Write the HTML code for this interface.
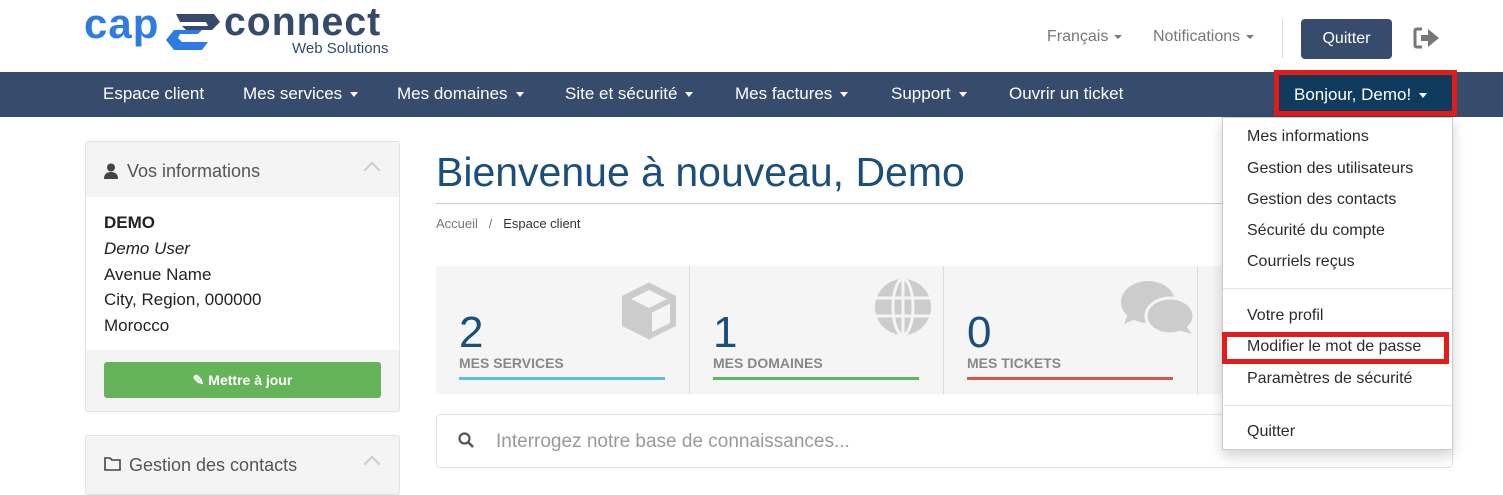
<!DOCTYPE html>
<html><head><meta charset="utf-8"><style>
*{box-sizing:border-box;margin:0;padding:0}
body{width:1503px;height:484px;overflow:hidden;background:#fff;font-family:"Liberation Sans",sans-serif;color:#333;position:relative}
.a{position:absolute}
.nav{left:0;top:72px;width:1503px;height:45px;background:#374b6c}
.nav span{position:absolute;top:12px;color:#fff;font-size:17px}
.car{display:inline-block;border-top:5px solid currentColor;border-left:4px solid transparent;border-right:4px solid transparent;vertical-align:middle;margin-left:8px}
.panel{background:#f4f4f4;border:1px solid #e3e3e3;border-radius:3px}
.dd span{position:absolute;left:25px;font-size:16px;color:#2b2b2b}
.stat{top:266px;width:254px;height:128px;background:#f5f5f5;border-right:1px solid #ddd}
.stat .n{position:absolute;left:23px;top:42px;font-size:44px;color:#1a4e7c}
.stat .l{position:absolute;left:23px;top:89px;font-size:14px;font-weight:bold;color:#888}
.stat .b{position:absolute;left:23px;top:111px;width:206px;height:3px}
</style></head><body>
<!-- logo -->
<div class="a" style="left:84px;top:0px;font-size:42px;font-weight:bold;color:#2e7be3;letter-spacing:1px">cap</div>
<svg class="a" style="left:162px;top:8px" width="58" height="44" viewBox="0 0 58 44"><path d="M14 6 H52 L58 14 L50 22 H24 L20 18 H46 L44 14 H18 Z" fill="#364a6b"/><path d="M12 22 H40 L36 26 H18 L16 30 L20 34 H46 L40 42 H12 L4 32 Z" fill="#2e7be3"/></svg>
<div class="a" style="left:224px;top:0px;font-size:40px;font-weight:bold;color:#364a6b;letter-spacing:1px;transform:scaleX(0.98);transform-origin:left">connect</div>
<div class="a" style="left:292px;top:40px;font-size:15px;color:#364a6b">Web Solutions</div>
<div class="a" style="left:1047px;top:28px;font-size:16px;color:#777">Français<span class="car" style="border-top-width:4px;margin-left:6px"></span></div>
<div class="a" style="left:1153px;top:28px;font-size:16px;color:#777">Notifications<span class="car" style="border-top-width:4px;margin-left:6px"></span></div>
<div class="a" style="left:1282px;top:19px;width:1px;height:39px;background:#ddd"></div>
<div class="a" style="left:1301px;top:19px;width:91px;height:40px;background:#374b6c;border-radius:4px;color:#fff;font-size:16px;text-align:center;line-height:40px">Quitter</div>
<svg class="a" style="left:1413px;top:27px" width="27" height="22" viewBox="0 0 27 22"><path d="M9 2H4Q2 2 2 4V18Q2 20 4 20H9" stroke="#777" stroke-width="3" fill="none"/><path d="M8 8H15V2L26 11L15 20V14H8Z" fill="#777"/></svg>
<div class="a nav">
<span style="left:103px">Espace client</span>
<span style="left:243px">Mes services<i class="car"></i></span>
<span style="left:397px">Mes domaines<i class="car"></i></span>
<span style="left:565px">Site et sécurité<i class="car"></i></span>
<span style="left:735px">Mes factures<i class="car"></i></span>
<span style="left:891px">Support<i class="car"></i></span>
<span style="left:1009px">Ouvrir un ticket</span>
</div>
<div class="a" style="left:1274px;top:70px;width:183px;height:46px;border:5px solid #e31b1b;background:#0f3b5e;color:#fff;font-size:17px;padding:10px 0 0 15px">Bonjour, Demo!<i class="car"></i></div>
<!-- sidebar -->
<div class="a panel" style="left:85px;top:141px;width:315px;height:271px"></div>
<div class="a" style="left:86px;top:197px;width:313px;height:153px;background:#fff"></div>
<svg class="a" style="left:104px;top:163px" width="14" height="16" viewBox="0 0 14 16"><circle cx="7" cy="4.5" r="4" fill="#444"/><path d="M0 16Q0 9 7 9Q14 9 14 16Z" fill="#444"/></svg>
<div class="a" style="left:127px;top:161px;font-size:18px;color:#555">Vos informations</div>
<div class="a" style="left:366px;top:164px;width:12px;height:12px;border-left:2px solid #ccc;border-top:2px solid #ccc;transform:rotate(45deg)"></div>
<div class="a" style="left:104px;top:210px;font-size:17px;line-height:25.8px;color:#222"><b>DEMO</b><br><i>Demo User</i><br>Avenue Name<br>City, Region, 000000<br>Morocco</div>
<div class="a" style="left:104px;top:362px;width:277px;height:36px;background:#65b45a;border-radius:3px;color:#fff;font-size:14px;font-weight:bold;text-align:center;line-height:36px">✎ Mettre à jour</div>
<div class="a panel" style="left:85px;top:435px;width:315px;height:60px"></div>
<svg class="a" style="left:104px;top:457px" width="17" height="14" viewBox="0 0 17 14"><path d="M1 1H6L8 3H16V13H1Z" fill="none" stroke="#444" stroke-width="1.6"/></svg>
<div class="a" style="left:129px;top:455px;font-size:18px;color:#555">Gestion des contacts</div>
<div class="a" style="left:366px;top:458px;width:12px;height:12px;border-left:2px solid #ccc;border-top:2px solid #ccc;transform:rotate(45deg)"></div>
<!-- main -->
<div class="a" style="left:436px;top:149px;font-size:41px;color:#1a4e7c">Bienvenue à nouveau, Demo</div>
<div class="a" style="left:436px;top:203px;width:786px;height:1px;background:#ccc"></div>
<div class="a" style="left:436px;top:216px;font-size:13px;color:#777">Accueil &nbsp;&nbsp;/&nbsp;&nbsp; <span style="color:#333">Espace client</span></div>
<div class="a stat" style="left:436px"><div class="n">2</div><div class="l">MES SERVICES</div><div class="b" style="background:#5bc0de"></div>
<svg class="a" style="left:183px;top:16px" width="60" height="58" viewBox="0 0 40 38"><path d="M20 0L38 9V29L20 38L2 29V9Z" fill="#ccc"/><path d="M8 11L20 5L32 11L20 17Z" fill="#f5f5f5"/><path d="M22 20L34 14V27L22 33Z" fill="#f5f5f5"/></svg></div>
<div class="a stat" style="left:690px"><div class="n">1</div><div class="l">MES DOMAINES</div><div class="b" style="background:#5cb85c"></div>
<svg class="a" style="left:184px;top:12px" width="58" height="58" viewBox="0 0 58 58"><circle cx="29" cy="29" r="28" fill="#ccc"/><g stroke="#f5f5f5" stroke-width="3" fill="none"><ellipse cx="29" cy="29" rx="10" ry="28"/><path d="M29 1V57M2 20H56M2 38H56"/></g></svg></div>
<div class="a stat" style="left:944px"><div class="n">0</div><div class="l">MES TICKETS</div><div class="b" style="background:#d9534f"></div>
<svg class="a" style="left:174px;top:12px" width="80" height="58" viewBox="0 0 80 58"><ellipse cx="30" cy="24" rx="27" ry="21" fill="#ccc"/><path d="M10 36L6 46L20 40Z" fill="#ccc"/><ellipse cx="52" cy="38" rx="24" ry="18" fill="#ccc" stroke="#f5f5f5" stroke-width="3"/><path d="M68 48L74 56L60 52Z" fill="#ccc"/></svg></div>
<div class="a" style="left:1198px;top:266px;width:30px;height:128px;background:#f5f5f5"></div>
<div class="a" style="left:436px;top:414px;width:1017px;height:54px;border:1px solid #e3e3e3;border-radius:4px"></div>
<svg class="a" style="left:458px;top:432px" width="16" height="16" viewBox="0 0 16 16"><circle cx="6.5" cy="6.5" r="5" stroke="#555" stroke-width="2.2" fill="none"/><path d="M10 10L15 15" stroke="#555" stroke-width="2.6"/></svg>
<div class="a" style="left:496px;top:431px;font-size:19px;color:#999">Interrogez notre base de connaissances...</div>
<!-- dropdown -->
<div class="a dd" style="left:1222px;top:117px;width:231px;height:333px;background:#fff;border:1px solid #ccc;box-shadow:0 6px 12px rgba(0,0,0,.175)">
<span style="top:10px;left:24px">Mes informations</span>
<span style="top:42px;left:24px">Gestion des utilisateurs</span>
<span style="top:73px;left:24px">Gestion des contacts</span>
<span style="top:104px;left:24px">Sécurité du compte</span>
<span style="top:135px;left:24px">Courriels reçus</span>
<div class="a" style="left:0;top:170px;width:229px;height:1px;background:#e5e5e5"></div>
<span style="top:189px;left:24px">Votre profil</span>
<div class="a" style="left:-1px;top:214px;width:227px;height:32px;border:5px solid #e31b1b"></div>
<span style="top:220px;left:24px">Modifier le mot de passe</span>
<span style="top:252px;left:24px">Paramètres de sécurité</span>
<div class="a" style="left:0;top:287px;width:229px;height:1px;background:#e5e5e5"></div>
<span style="top:305px;left:24px">Quitter</span>
</div>
</body></html>
